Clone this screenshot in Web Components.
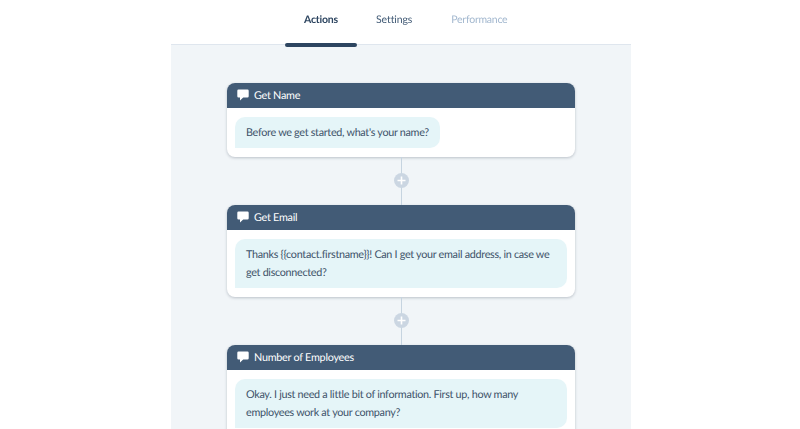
<!DOCTYPE html>
<html>
<head>
<meta charset="utf-8">
<style>
  html, body { margin: 0; height: 100%; overflow: hidden; background: #fff; }
  body { font-family: 'Lato', 'Liberation Sans', sans-serif; text-rendering: geometricPrecision; }
</style>
</head>
<body>
<flow-page>
  <tab-bar slot="tabs"></tab-bar>
  <flow-card title="Get Name">Before we get started, what's your name?</flow-card>
  <flow-connector></flow-connector>
  <flow-card title="Get Email">Thanks {{contact.firstname}}! Can I get your email address, in case we get disconnected?</flow-card>
  <flow-connector></flow-connector>
  <flow-card title="Number of Employees">Okay. I just need a little bit of information. First up, how many employees work at your company?</flow-card>
</flow-page>
<script>
class FlowPage extends HTMLElement {
  constructor() {
    super();
    this.attachShadow({ mode: 'open' });
  }
  connectedCallback() {
    this.shadowRoot.innerHTML = `
      <style>
        :host {
          display: block;
          width: 460px;
          height: 429px;
          margin-left: 171px;
          overflow: hidden;
          filter: blur(0.35px);
        }
        .content {
          background: #f1f5f8;
          padding: 38px 56px 0;
          height: 100%;
          box-sizing: border-box;
          display: flex;
          flex-direction: column;
        }
      </style>
      <slot name="tabs"></slot>
      <div class="content"><slot></slot></div>
    `;
  }
}
customElements.define('flow-page', FlowPage);

class TabBar extends HTMLElement {
  constructor() {
    super();
    this.attachShadow({ mode: 'open' });
  }
  connectedCallback() {
    this.shadowRoot.innerHTML = `
      <style>
        :host {
          display: block;
          height: 45px;
          box-sizing: border-box;
          border-bottom: 1px solid #dfe6ee;
        }
        nav {
          display: flex;
          height: 100%;
          padding-left: 114px;
          font-size: 10.5px;
          letter-spacing: -0.1px;
        }
        span {
          position: relative;
          display: block;
          padding-top: 13px;
          text-align: center;
          line-height: 14px;
        }
        .actions { width: 72px; color: #2d4560; font-weight: 700; letter-spacing: -0.2px; }
        .settings { margin-left: 19px; color: #425b76; }
        .performance { margin-left: 39px; color: #a3b8cf; letter-spacing: -0.25px; }
        .actions::after {
          content: '';
          position: absolute;
          left: 0;
          right: 0;
          top: 43px;
          height: 4px;
          border-radius: 2px;
          background: #2d4560;
        }
      </style>
      <nav>
        <span class="actions">Actions</span>
        <span class="settings">Settings</span>
        <span class="performance">Performance</span>
      </nav>
    `;
  }
}
customElements.define('tab-bar', TabBar);

class FlowCard extends HTMLElement {
  constructor() {
    super();
    this.attachShadow({ mode: 'open' });
  }
  connectedCallback() {
    this.shadowRoot.innerHTML = `
      <style>
        :host {
          display: block;
          flex: none;
          border-radius: 8px;
          background: #fff;
          box-shadow: 0 1px 3px rgba(45, 62, 80, 0.28);
        }
        header {
          display: flex;
          align-items: center;
          gap: 5px;
          height: 25px;
          padding: 0 10px 1px;
          box-sizing: border-box;
          background: #425b76;
          border-radius: 8px 8px 0 0;
          color: #fff;
          font-size: 10.8px;
          letter-spacing: -0.25px;
        }
        svg { width: 12px; height: 12px; flex: none; }
        .body { padding: 9px 8px; }
        .bubble {
          display: table;
          box-sizing: border-box;
          padding: 6.5px 11px;
          background: #e5f5f8;
          border-radius: 10px 10px 10px 0;
          color: #3d5269;
          font-size: 10.8px;
          letter-spacing: -0.3px;
          line-height: 18px;
        }
      </style>
      <header>
        <svg viewBox="0 0 12 12"><path fill="#fff" d="M1.5 0.5h9A1.2 1.2 0 0 1 11.7 1.7v5.6a1.2 1.2 0 0 1-1.2 1.2H6.2L3 11.6V8.5H1.5A1.2 1.2 0 0 1 .3 7.3V1.7A1.2 1.2 0 0 1 1.5 .5z"/></svg>
        <span>${this.getAttribute('title')}</span>
      </header>
      <div class="body"><div class="bubble"><slot></slot></div></div>
    `;
  }
}
customElements.define('flow-card', FlowCard);

class FlowConnector extends HTMLElement {
  constructor() {
    super();
    this.attachShadow({ mode: 'open' });
  }
  connectedCallback() {
    this.shadowRoot.innerHTML = `
      <style>
        :host {
          display: flex;
          flex: none;
          justify-content: center;
          align-items: center;
          height: 48px;
          position: relative;
        }
        .line {
          position: absolute;
          top: 0;
          bottom: 0;
          left: 50%;
          width: 1px;
          margin-left: -0.5px;
          background: #c6d4e0;
        }
        svg { position: relative; width: 15px; height: 15px; margin-bottom: 2px; }
      </style>
      <div class="line"></div>
      <svg viewBox="0 0 15 15">
        <circle cx="7.5" cy="7.5" r="7.5" fill="#cbd6e2"/>
        <path d="M7.5 3.5v8M3.5 7.5h8" stroke="#fff" stroke-width="1.6"/>
      </svg>
    `;
  }
}
customElements.define('flow-connector', FlowConnector);
</script>
</body>
</html>
